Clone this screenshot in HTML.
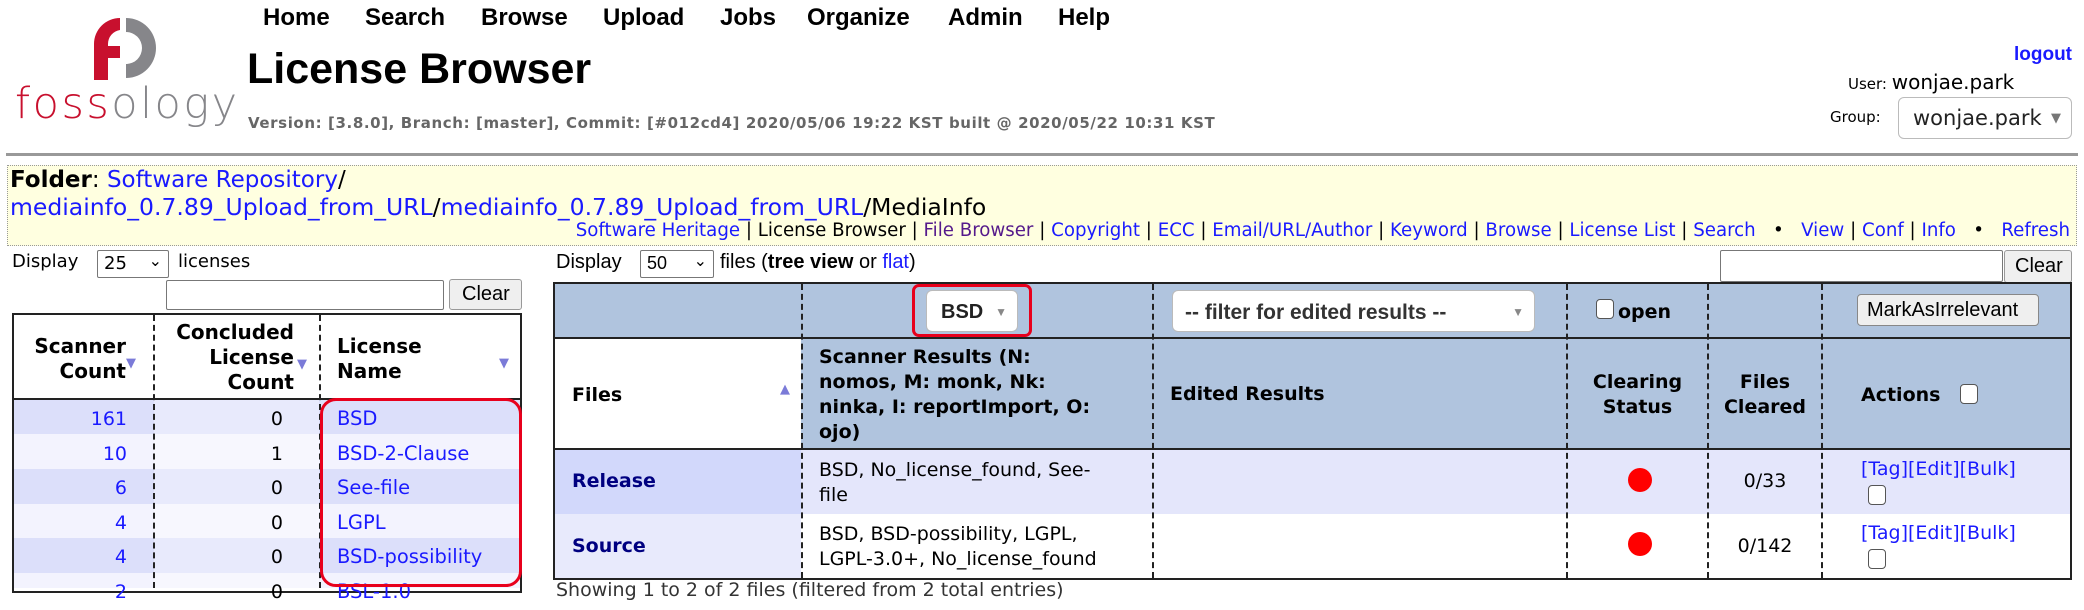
<!DOCTYPE html>
<html><head><meta charset="utf-8">
<style>
*{box-sizing:border-box;margin:0;padding:0}
body{width:2084px;height:588px;overflow:hidden;background:#fff;font-family:"DejaVu Sans","Liberation Sans",sans-serif;color:#000;position:relative}
.a{position:absolute;white-space:nowrap}
.menu{font-family:"Liberation Sans",sans-serif;font-weight:bold;font-size:24px;top:4px}
a,.lk{color:#1a1aff;text-decoration:none}
.sel{position:absolute;border:1px solid #bbb;border-radius:6px;background:#fff}
.hd{background:#b0c4de}
.vl{position:absolute;border-left:2px dashed #222}
.cb{position:absolute;width:18px;height:20px;border:1.5px solid #555;border-radius:4px;background:#fff}
.dot{position:absolute;width:24px;height:24px;border-radius:50%;background:#f00}
.t{font-family:"DejaVu Sans",sans-serif;font-size:19px}
</style></head><body>
<svg class="a" style="left:86px;top:14px" width="80" height="70" viewBox="0 0 80 70">
<path d="M40 4 A30 30 0 0 1 40 64 L40 50 A16 16 0 0 0 40 18 Z" fill="#86868a"/>
<path d="M8 66 L8 30 A26 26 0 0 1 34 4 L34 16 A14 14 0 0 0 22 30 L22 32 L34 32 L34 44 L22 44 L22 66 Z" fill="#c8102e"/>
</svg>
<div class="a" style="left:15px;top:79px;font-family:'DejaVu Sans',sans-serif;font-size:43px;letter-spacing:2.5px;font-weight:300"><span style="color:#c8102e">foss</span><span style="color:#86868a">ology</span></div>

<div class="a menu" style="left:263px">Home</div>
<div class="a menu" style="left:365px">Search</div>
<div class="a menu" style="left:481px">Browse</div>
<div class="a menu" style="left:603px">Upload</div>
<div class="a menu" style="left:720px">Jobs</div>
<div class="a menu" style="left:807px">Organize</div>
<div class="a menu" style="left:948px">Admin</div>
<div class="a menu" style="left:1058px">Help</div>
<div class="a" style="left:247px;top:45px;font-family:'Liberation Sans',sans-serif;font-weight:bold;font-size:43px">License Browser</div>
<div class="a" style="left:248px;top:114px;font-family:'DejaVu Sans',sans-serif;font-weight:bold;font-size:15px;letter-spacing:0.6px;color:#666">Version: [3.8.0], Branch: [master], Commit: [#012cd4] 2020/05/06 19:22 KST built @ 2020/05/22 10:31 KST</div>

<div class="a" style="right:12px;top:44px;font-family:'Liberation Sans',sans-serif;font-weight:bold;font-size:19px;color:#1a1aff">logout</div>
<div class="a" style="left:1848px;top:70px;font-size:15px">User: <span style="font-size:20px">wonjae.park</span></div>
<div class="a" style="left:1830px;top:108px;font-size:15px">Group:</div>
<div class="sel" style="left:1898px;top:97px;width:174px;height:42px;font-size:21px;padding:8px 0 0 14px;color:#222">wonjae.park <span style="color:#777;font-size:13px;position:absolute;right:10px;top:13px">▼</span></div>

<div class="a" style="left:6px;top:153px;width:2072px;height:3px;background:#999"></div>

<div class="a" style="left:7px;top:165px;width:2070px;height:81px;background:#ffffe0;border:1px dotted #999"></div>
<div class="a" style="left:10px;top:167px;font-size:23px"><b>Folder</b>: <a>Software Repository</a>/</div>
<div class="a" style="left:10px;top:193px;font-size:23.5px"><a>mediainfo_0.7.89_Upload_from_URL</a>/<a>mediainfo_0.7.89_Upload_from_URL</a>/MediaInfo</div>
<div class="a" style="right:14px;top:220px;font-family:'DejaVu Sans',sans-serif;font-size:18.2px;color:#000"><a>Software Heritage</a> | License Browser | <a style="color:#551a8b">File Browser</a> | <a>Copyright</a> | <a>ECC</a> | <a>Email/URL/Author</a> | <a>Keyword</a> | <a>Browse</a> | <a>License List</a> | <a>Search</a> &nbsp;&nbsp;•&nbsp;&nbsp; <a>View</a> | <a>Conf</a> | <a>Info</a> &nbsp;&nbsp;•&nbsp;&nbsp; <a>Refresh</a></div>

<div class="a" style="left:12px;top:251px;font-size:18px">Display</div>
<div class="sel" style="left:97px;top:250px;width:72px;height:28px;border-radius:2px;border-color:#777;font-size:18px;padding:2px 0 0 6px">25 <span style="position:absolute;right:6px;top:0;font-size:16px">⌄</span></div>
<div class="a" style="left:178px;top:251px;font-size:18px">licenses</div>
<div class="a" style="left:166px;top:280px;width:278px;height:30px;border:1.5px solid #777;border-radius:2px"></div>
<div class="a" style="left:449px;top:279px;width:73px;height:31px;border:1px solid #999;border-radius:3px;background:#efefef;font-family:'Liberation Sans',sans-serif;font-size:20px;padding:3px 0 0 12px">Clear</div>

<div class="a" style="left:12px;top:313px;width:510px;height:280px;border:2px solid #222"></div>
<div class="a" style="left:12px;top:398px;width:510px;height:2px;background:#222"></div>
<div class="a" style="left:14px;top:400px;width:506px;height:34px;background:#dcdffa"></div>
<div class="a" style="left:14px;top:434px;width:506px;height:35px;background:#f3f3fe"></div>
<div class="a" style="left:14px;top:469px;width:506px;height:35px;background:#dcdffa"></div>
<div class="a" style="left:14px;top:504px;width:506px;height:34px;background:#f3f3fe"></div>
<div class="a" style="left:14px;top:538px;width:506px;height:35px;background:#dcdffa"></div>
<div class="a" style="left:14px;top:573px;width:506px;height:15px;background:#f3f3fe"></div>
<div class="a" style="left:154px;top:400px;width:165px;height:188px;background:rgba(255,255,255,0.35)"></div>
<div class="vl" style="left:153px;top:315px;height:273px"></div>
<div class="vl" style="left:319px;top:315px;height:273px"></div>
<div class="a" style="left:22px;top:334px;font-weight:bold;font-size:20px;text-align:right;line-height:25px;width:104px">Scanner<br>Count</div>
<div class="a" style="left:126px;top:356px;color:#7b7bd8;font-size:13px">▼</div>
<div class="a" style="left:160px;top:320px;font-weight:bold;font-size:20px;text-align:right;line-height:25px;width:134px">Concluded<br>License<br>Count</div>
<div class="a" style="left:297px;top:357px;color:#7b7bd8;font-size:13px">▼</div>
<div class="a" style="left:337px;top:334px;font-weight:bold;font-size:20px;line-height:25px">License<br>Name</div>
<div class="a" style="left:499px;top:356px;color:#7b7bd8;font-size:13px">▼</div>
<div class="a" style="left:14px;top:402px;width:113px;text-align:right;font-size:19px;line-height:34.6px;color:#1a1aff">161<br>10<br>6<br>4<br>4<br>2</div>
<div class="a" style="left:160px;top:402px;width:123px;text-align:right;font-size:19px;line-height:34.6px">0<br>1<br>0<br>0<br>0<br>0</div>
<div class="a" style="left:337px;top:402px;font-size:19.5px;line-height:34.6px;color:#1a1aff">BSD<br>BSD-2-Clause<br>See-file<br>LGPL<br>BSD-possibility<br>BSL-1.0</div>
<div class="a" style="left:320px;top:398px;width:202px;height:189px;border:3.5px solid #e8001c;border-radius:16px"></div>

<div class="a" style="left:556px;top:251px;font-family:'Liberation Sans',sans-serif;font-size:20px">Display</div>
<div class="sel" style="left:640px;top:250px;width:74px;height:28px;border-radius:2px;border-color:#777;font-size:18px;padding:2px 0 0 6px;font-family:'Liberation Sans',sans-serif">50 <span style="position:absolute;right:6px;top:0;font-size:16px">⌄</span></div>
<div class="a" style="left:720px;top:251px;font-family:'Liberation Sans',sans-serif;font-size:20px">files (<b>tree view</b> or <a>flat</a>)</div>
<div class="a" style="left:1720px;top:250px;width:283px;height:32px;border:1.5px solid #777;border-radius:2px"></div>
<div class="a" style="left:2004px;top:250px;width:68px;height:33px;border:1px solid #999;border-radius:3px;background:#efefef;font-family:'Liberation Sans',sans-serif;font-size:20px;padding:4px 0 0 10px">Clear</div>

<div class="a hd" style="left:553px;top:282px;width:1519px;height:168px;border:2px solid #222"></div>
<div class="a" style="left:555px;top:338px;width:246px;height:111px;background:#fff"></div>
<div class="a" style="left:553px;top:337px;width:1519px;height:2px;background:#222"></div>
<div class="a" style="left:553px;top:448px;width:1519px;height:2px;background:#222"></div>
<div class="a" style="left:553px;top:450px;width:1519px;height:130px;border:2px solid #222;border-top:0"></div>
<div class="a" style="left:555px;top:450px;width:1515px;height:64px;background:#e4e6fb"></div>
<div class="a" style="left:555px;top:450px;width:246px;height:64px;background:#d2d8fb"></div>
<div class="a" style="left:555px;top:514px;width:246px;height:64px;background:#e8eafc"></div>
<div class="vl" style="left:801px;top:284px;height:294px"></div>
<div class="vl" style="left:1152px;top:284px;height:294px"></div>
<div class="vl" style="left:1566px;top:284px;height:294px"></div>
<div class="vl" style="left:1707px;top:284px;height:294px"></div>
<div class="vl" style="left:1821px;top:284px;height:294px"></div>

<div class="sel" style="left:926px;top:290px;width:92px;height:42px;font-family:'Liberation Sans',sans-serif;font-weight:bold;font-size:20px;padding:10px 0 0 14px;color:#222">BSD <span style="color:#888;font-size:12px;position:absolute;right:10px;top:14px">▼</span></div>
<div class="a" style="left:912px;top:284px;width:120px;height:53px;border:3.5px solid #e8001c;border-radius:7px"></div>
<div class="sel" style="left:1172px;top:290px;width:363px;height:42px;font-family:'Liberation Sans',sans-serif;font-weight:bold;font-size:21px;padding:10px 0 0 12px;color:#333">-- filter for edited results -- <span style="color:#888;font-size:12px;position:absolute;right:10px;top:14px">▼</span></div>
<div class="cb" style="left:1596px;top:299px"></div>
<div class="a t" style="left:1618px;top:301px;font-weight:bold">open</div>
<div class="a" style="left:1857px;top:294px;width:182px;height:32px;border:1px solid #888;border-radius:4px;background:#efefef;font-family:'Liberation Sans',sans-serif;font-size:20px;padding:4px 0 0 9px">MarkAsIrrelevant</div>

<div class="a t" style="left:572px;top:384px;font-weight:bold">Files</div>
<div class="a" style="left:780px;top:382px;color:#7b7bd8;font-size:13px">▲</div>
<div class="a t" style="left:819px;top:345px;font-weight:bold;line-height:25px">Scanner Results (N:<br>nomos, M: monk, Nk:<br>ninka, I: reportImport, O:<br>ojo)</div>
<div class="a t" style="left:1170px;top:383px;font-weight:bold">Edited Results</div>
<div class="a t" style="left:1568px;top:370px;width:139px;text-align:center;font-weight:bold;line-height:25px">Clearing<br>Status</div>
<div class="a t" style="left:1709px;top:370px;width:112px;text-align:center;font-weight:bold;line-height:25px">Files<br>Cleared</div>
<div class="a t" style="left:1861px;top:384px;font-weight:bold">Actions</div>
<div class="cb" style="left:1960px;top:384px"></div>

<div class="a t" style="left:572px;top:470px;font-weight:bold;color:#000080">Release</div>
<div class="a t" style="left:819px;top:458px;line-height:25px">BSD, No_license_found, See-<br>file</div>
<div class="dot" style="left:1628px;top:468px"></div>
<div class="a t" style="left:1709px;top:470px;width:112px;text-align:center">0/33</div>
<div class="a t" style="left:1861px;top:458px"><a>[Tag]</a><a>[Edit]</a><a>[Bulk]</a></div>
<div class="cb" style="left:1868px;top:485px"></div>

<div class="a t" style="left:572px;top:535px;font-weight:bold;color:#000080">Source</div>
<div class="a t" style="left:819px;top:522px;line-height:25px">BSD, BSD-possibility, LGPL,<br>LGPL-3.0+, No_license_found</div>
<div class="dot" style="left:1628px;top:532px"></div>
<div class="a t" style="left:1709px;top:535px;width:112px;text-align:center">0/142</div>
<div class="a t" style="left:1861px;top:522px"><a>[Tag]</a><a>[Edit]</a><a>[Bulk]</a></div>
<div class="cb" style="left:1868px;top:549px"></div>
<div class="a" style="left:556px;top:579px;font-size:19px;color:#333">Showing 1 to 2 of 2 files (filtered from 2 total entries)</div>
</body></html>
